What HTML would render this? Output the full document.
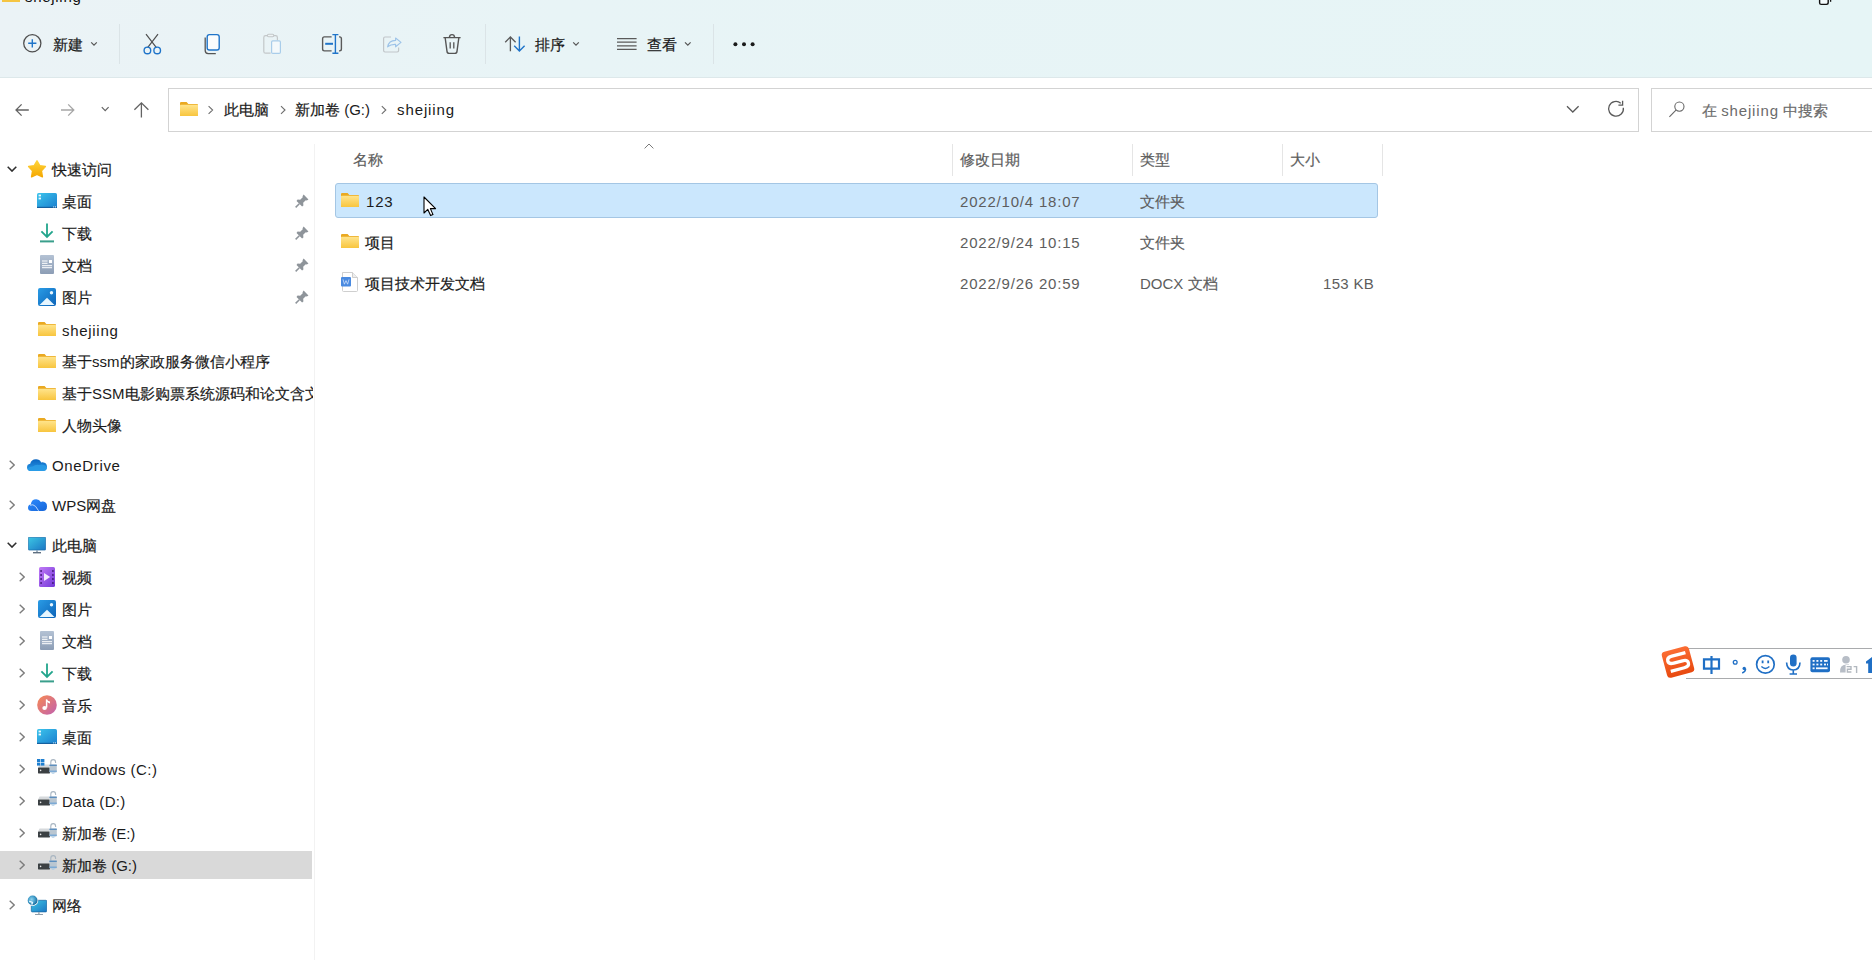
<!DOCTYPE html>
<html><head><meta charset="utf-8">
<style>
*{box-sizing:border-box}
html,body{margin:0;padding:0;width:1872px;height:960px;overflow:hidden;background:#fff;font-family:"Liberation Sans",sans-serif;font-size:15px;color:#1b1b1b}
.a{position:absolute}
.t{position:absolute;line-height:20px;white-space:nowrap;-webkit-text-stroke:.2px currentColor}
svg{position:absolute;overflow:visible}
#tb{position:absolute;left:0;top:0;width:1872px;height:78px;background:linear-gradient(90deg,#ebf3f6 0%,#e8f4f6 30%,#e6f5f6 100%);border-bottom:1px solid #dde8ea}
.sep{position:absolute;top:24px;width:1px;height:40px;background:#dbe4e7}
.navt{position:absolute;line-height:20px;white-space:nowrap;color:#1a1a1a;-webkit-text-stroke:.2px currentColor}
.hd{position:absolute;line-height:20px;white-space:nowrap;color:#5d5d5d;-webkit-text-stroke:.2px currentColor}
.cl{position:absolute;top:144px;width:1px;height:32px;background:#e5e5e5}
.g{color:#5d5d5d}
</style></head><body>
<svg width="0" height="0" style="position:absolute">
<defs>
<linearGradient id="gFold" x1="0" y1="0" x2="0" y2="1"><stop offset="0" stop-color="#ffe48c"/><stop offset="1" stop-color="#f8c53e"/></linearGradient>
<linearGradient id="gStar" x1="0" y1="0" x2="0" y2="1"><stop offset="0" stop-color="#ffd43a"/><stop offset="1" stop-color="#f5a800"/></linearGradient>
<linearGradient id="gDesk" x1="0" y1="0" x2="1" y2="1"><stop offset="0" stop-color="#3cc4ec"/><stop offset="1" stop-color="#1a7fcf"/></linearGradient>
<linearGradient id="gDoc" x1="0" y1="0" x2="0" y2="1"><stop offset="0" stop-color="#b4c2d4"/><stop offset="1" stop-color="#8c9db5"/></linearGradient>
<linearGradient id="gPic" x1="0" y1="0" x2="1" y2="1"><stop offset="0" stop-color="#2a9ce6"/><stop offset="1" stop-color="#0c63b8"/></linearGradient>
<linearGradient id="gMon" x1="0" y1="0" x2="1" y2="1"><stop offset="0" stop-color="#3cc6e4"/><stop offset="1" stop-color="#1b76c4"/></linearGradient>
<linearGradient id="gVid" x1="0" y1="0" x2="1" y2="1"><stop offset="0" stop-color="#c07af6"/><stop offset="1" stop-color="#7338d8"/></linearGradient>
<linearGradient id="gMus" x1="0" y1="0" x2="1" y2="1"><stop offset="0" stop-color="#f88a52"/><stop offset="1" stop-color="#c060b0"/></linearGradient>
<linearGradient id="gOne" x1="0" y1="0" x2="0" y2="1"><stop offset="0" stop-color="#0a64c0"/><stop offset="1" stop-color="#2a9be8"/></linearGradient>
<linearGradient id="gWps" x1="0" y1="0" x2="1" y2="1"><stop offset="0" stop-color="#2f8cff"/><stop offset="1" stop-color="#1565d8"/></linearGradient>
<symbol id="folder" viewBox="0 0 18 14"><path d="M0 1.1Q0 0 1.1 0H6.6L8.3 2.1H17Q18 2.1 18 3.1V13Q18 14 17 14H1Q0 14 0 13Z" fill="#eaa921"/><path d="M0 3.3Q0 2.8 .6 2.8H17.4Q18 2.8 18 3.4V13Q18 14 17 14H1Q0 14 0 13Z" fill="url(#gFold)"/></symbol>
<symbol id="desk" viewBox="0 0 20 15"><rect x="0" y="0" width="20" height="15" rx="1.6" fill="url(#gDesk)"/><rect x="0" y="13.8" width="20" height="1.2" fill="#15609f"/><rect x="16.2" y="13.4" width="1" height="1" fill="#e8f7fd"/><rect x="18" y="13.4" width="1" height="1" fill="#e8f7fd"/><rect x="1.6" y="1.6" width="2.4" height="1.8" fill="#e8f7fd"/><rect x="1.6" y="4.6" width="2.4" height="1.8" fill="#e8f7fd"/></symbol>
<symbol id="dl" viewBox="0 0 14 20"><path d="M7 .4V14M1.4 8.4L7 14L12.6 8.4" fill="none" stroke="#22a58c" stroke-width="1.8"/><rect x="0" y="17.4" width="14" height="2" fill="#3a9f8c"/></symbol>
<symbol id="doc" viewBox="0 0 14 19"><rect x="0" y="0" width="14" height="19" rx="1" fill="url(#gDoc)"/><rect x="2" y="5.5" width="5.5" height="1" fill="#fff"/><rect x="2" y="7.8" width="5.5" height="1" fill="#fff"/><rect x="9" y="5" width="3" height="3" fill="#fff"/><rect x="2" y="10.2" width="10" height="1" fill="#fff"/><rect x="2" y="12.2" width="10" height="1" fill="#fff"/></symbol>
<symbol id="pic" viewBox="0 0 18 18"><rect width="18" height="18" rx="2" fill="url(#gPic)"/><path d="M1.5 17L9 9.8L16.5 17Z" fill="#e6f6ff"/><circle cx="13.5" cy="4.8" r="1.7" fill="#e6f6ff"/></symbol>
<symbol id="pin" viewBox="0 0 13 13"><path d="M8 0.5L12.5 5L11 6L10 5.8L7.6 8.2L7.8 10.6L6.6 11.6L1.4 6.4L2.4 5.2L4.8 5.4L7.2 3L7 2Z" fill="#8e949a"/><path d="M4 9L.6 12.4" stroke="#8e949a" stroke-width="1.4"/></symbol>
<symbol id="mon" viewBox="0 0 18 17"><rect x=".3" y=".3" width="17.4" height="12.8" rx=".8" fill="url(#gMon)" stroke="#13609f" stroke-width=".6"/><rect x="8.2" y="13.2" width="1.6" height="2" fill="#8aa0b4"/><rect x="5" y="15" width="8" height="1.4" fill="#5f6f80"/></symbol>
<symbol id="vid" viewBox="0 0 16 20"><rect width="16" height="20" rx="1.6" fill="url(#gVid)"/><g fill="#3b1670"><rect x="1.3" y="3.2" width="1.6" height="1.6"/><rect x="1.3" y="7.2" width="1.6" height="1.6"/><rect x="1.3" y="11.2" width="1.6" height="1.6"/><rect x="1.3" y="15.2" width="1.6" height="1.6"/><rect x="13.1" y="3.2" width="1.6" height="1.6"/><rect x="13.1" y="7.2" width="1.6" height="1.6"/><rect x="13.1" y="11.2" width="1.6" height="1.6"/><rect x="13.1" y="15.2" width="1.6" height="1.6"/></g><path d="M5 6V14L11.2 10Z" fill="#f2eafd"/></symbol>
<symbol id="mus" viewBox="0 0 20 20"><circle cx="10" cy="10" r="9.8" fill="url(#gMus)"/><path d="M9.6 4.4V12.6" stroke="#fff" stroke-width="1.5"/><path d="M9.6 4.2Q10.6 6 13 6.6V8.4Q11 8 9.6 6.6Z" fill="#fff"/><ellipse cx="7.6" cy="13" rx="2.3" ry="2" fill="#fff"/></symbol>
<symbol id="drv" viewBox="0 0 20 16"><path d="M1 8.4L2.6 5.6H12V8.4Z" fill="#d6d9dc"/><rect x="1" y="8.4" width="12" height="6" rx=".6" fill="#3b4043"/><circle cx="3.6" cy="11.4" r=".8" fill="#e8e8e8"/><path d="M13.8 6.2V3.2Q13.8 0.6 16.2 0.6Q18.6 0.6 18.6 3.2V4" fill="none" stroke="#a9b6c2" stroke-width="1.1"/><rect x="12.4" y="5.6" width="7.4" height="8" rx=".8" fill="#b9c6d1"/><rect x="12.4" y="5.6" width="7.4" height="1.4" fill="#5d8fbf"/><rect x="12.4" y="11.6" width="7.4" height="1.2" fill="#6ea3d6"/><path d="M13.8 13.6Q16 16 18.4 13.6" fill="#a8c9e6"/></symbol>
<symbol id="one" viewBox="0 0 20 13"><path d="M4.2 13Q0 13 0 9.4Q0 6.2 3.2 5.8Q4.2 1.2 9 1.2Q12.8 1.2 14.2 4.4Q15 4.2 15.6 4.2Q20 4.6 20 8.8Q20 13 16 13Z" fill="url(#gOne)"/><path d="M4.2 13Q1 13 1 10.6Q2 8.8 5.6 8.6Q8.4 6.2 12 7Q15 5.6 18.2 7.4Q20 8.6 20 10Q19.4 13 16 13Z" fill="#2a9ce6" opacity=".85"/></symbol>
<symbol id="wps" viewBox="0 0 19 13"><path d="M3.6 13Q0 13 0 9.8Q0 7 2.8 6.6Q3.4 1.2 8.2 1.2Q11.4 1.2 12.8 4Q13.8 3.4 15 3.6Q19 4 19 8.4Q19 13 15 13Z" fill="url(#gWps)"/><path d="M2 7.2Q5 5.8 7.6 8.4L10.6 12.8" fill="none" stroke="#cfe3ff" stroke-width=".9"/></symbol>
<symbol id="net" viewBox="0 0 20 20"><radialGradient id="gGlobe" cx=".4" cy=".4" r=".6"><stop offset="0" stop-color="#8fd3ee"/><stop offset=".6" stop-color="#3f9bc8"/><stop offset="1" stop-color="#1e6c9c"/></radialGradient><rect x="4.3" y="5.3" width="15.4" height="11.6" rx=".8" fill="url(#gMon)" stroke="#15639f" stroke-width=".7"/><rect x="11.2" y="17" width="1.4" height="2" fill="#9aa8b4"/><rect x="8" y="19" width="8" height="1" fill="#8f9eab"/><circle cx="5.6" cy="5.4" r="5.6" fill="#fff"/><circle cx="5.6" cy="5.4" r="4.9" fill="url(#gGlobe)"/><path d="M2.2 6.2L5.4 7.4L4.8 9.6" fill="none" stroke="#e4f7ff" stroke-width="1.5"/></symbol>
<symbol id="chevR" viewBox="0 0 6 10"><path d="M.7 .7L5.2 5L.7 9.3" fill="none" stroke="#7c7c7c" stroke-width="1.35"/></symbol>
<symbol id="chevD" viewBox="0 0 10 6"><path d="M.7 .7L5 5.1L9.3 .7" fill="none" stroke="#2e2e2e" stroke-width="1.5"/></symbol>
</defs></svg>

<!-- toolbar -->
<div id="tb"></div>
<div class="a" style="left:2px;top:0;width:18px;height:2px;background:#f5c542"></div>
<div class="t" style="left:25px;top:-13px;color:#111;letter-spacing:.7px;-webkit-text-stroke:0">shejiing</div>
<svg style="left:1815px;top:0" width="20" height="8" viewBox="1815 0 20 8"><path d="M1819.6 -4V2.6Q1819.6 4.4 1821.4 4.4H1826.4Q1828.2 4.4 1828.2 2.6V-4" fill="#f4fbfc" stroke="#111" stroke-width="1.4"/><path d="M1830.6 -2V1.8" stroke="#111" stroke-width="1.3"/></svg>

<!-- 新建 -->
<div class="t" style="left:53px;top:35px;color:#1a1a1a">新建</div>
<div class="sep" style="left:119px"></div>
<div class="sep" style="left:485px"></div>
<div class="t" style="left:535px;top:35px;color:#1a1a1a">排序</div>
<div class="t" style="left:647px;top:35px;color:#1a1a1a">查看</div>
<div class="sep" style="left:713px"></div>

<!-- address row -->
<div class="a" style="left:168px;top:88px;width:1471px;height:44px;border:1px solid #d3d3d3;background:#fff"></div>
<div class="a" style="left:1651px;top:88px;width:240px;height:44px;border:1px solid #d3d3d3;background:#fff"></div>
<div class="t" style="left:224px;top:100px">此电脑</div>
<div class="t" style="left:295px;top:100px">新加卷<span style="-webkit-text-stroke:0"> (G:)</span></div>
<div class="t" style="left:397px;top:100px;letter-spacing:.9px;-webkit-text-stroke:0">shejiing</div>
<div class="t" style="left:1702px;top:101px;color:#6b6b6b">在 <span style="letter-spacing:.85px;-webkit-text-stroke:0">shejiing</span> 中搜索</div>

<!-- nav pane -->
<div class="a" style="left:314px;top:144px;width:1px;height:816px;background:#f2f2f2"></div>
<div class="a" style="left:0;top:851px;width:312px;height:28px;background:#d9d9d9"></div>
<div class="navt" style="left:52px;top:160px">快速访问</div>
<div class="navt" style="left:62px;top:192px">桌面</div>
<div class="navt" style="left:62px;top:224px">下载</div>
<div class="navt" style="left:62px;top:256px">文档</div>
<div class="navt" style="left:62px;top:288px">图片</div>
<div class="navt" style="left:62px;top:321px;letter-spacing:.7px;-webkit-text-stroke:0">shejiing</div>
<div class="navt" style="left:62px;top:352px">基于<span style="-webkit-text-stroke:0">ssm</span>的家政服务微信小程序</div>
<div class="navt" style="left:62px;top:384px;width:251px;overflow:hidden">基于<span style="-webkit-text-stroke:0">SSM</span>电影购票系统源码和论文含文档</div>
<div class="navt" style="left:62px;top:416px">人物头像</div>
<div class="navt" style="left:52px;top:456px;letter-spacing:.65px;-webkit-text-stroke:0">OneDrive</div>
<div class="navt" style="left:52px;top:496px"><span style="-webkit-text-stroke:0">WPS</span>网盘</div>
<div class="navt" style="left:52px;top:536px">此电脑</div>
<div class="navt" style="left:62px;top:568px">视频</div>
<div class="navt" style="left:62px;top:600px">图片</div>
<div class="navt" style="left:62px;top:632px">文档</div>
<div class="navt" style="left:62px;top:664px">下载</div>
<div class="navt" style="left:62px;top:696px">音乐</div>
<div class="navt" style="left:62px;top:728px">桌面</div>
<div class="navt" style="left:62px;top:760px;letter-spacing:.45px;-webkit-text-stroke:0">Windows (C:)</div>
<div class="navt" style="left:62px;top:792px;letter-spacing:.3px;-webkit-text-stroke:0">Data (D:)</div>
<div class="navt" style="left:62px;top:824px">新加卷<span style="-webkit-text-stroke:0"> (E:)</span></div>
<div class="navt" style="left:62px;top:856px">新加卷<span style="-webkit-text-stroke:0"> (G:)</span></div>
<div class="navt" style="left:52px;top:896px">网络</div>

<!-- list header -->
<div class="hd" style="left:353px;top:150px">名称</div>
<div class="hd" style="left:960px;top:150px">修改日期</div>
<div class="hd" style="left:1140px;top:150px">类型</div>
<div class="hd" style="left:1290px;top:150px">大小</div>
<div class="cl" style="left:952px"></div>
<div class="cl" style="left:1132px"></div>
<div class="cl" style="left:1282px"></div>
<div class="cl" style="left:1382px"></div>

<!-- rows -->
<div class="a" style="left:335px;top:183px;width:1043px;height:35px;background:#cbe7fd;border:1px solid #a4c6e4;border-radius:3px"></div>
<div class="t" style="left:366px;top:192px;letter-spacing:.8px;-webkit-text-stroke:0">123</div>
<div class="t g" style="left:960px;top:192px;letter-spacing:.8px;-webkit-text-stroke:0">2022/10/4 18:07</div>
<div class="t g" style="left:1140px;top:192px">文件夹</div>
<div class="t" style="left:365px;top:233px">项目</div>
<div class="t g" style="left:960px;top:233px;letter-spacing:.8px;-webkit-text-stroke:0">2022/9/24 10:15</div>
<div class="t g" style="left:1140px;top:233px">文件夹</div>
<div class="t" style="left:365px;top:274px">项目技术开发文档</div>
<div class="t g" style="left:960px;top:274px;letter-spacing:.8px;-webkit-text-stroke:0">2022/9/26 20:59</div>
<div class="t g" style="left:1140px;top:274px"><span style="-webkit-text-stroke:0">DOCX </span>文档</div>
<div class="t g" style="left:1323px;top:274px;letter-spacing:.3px;-webkit-text-stroke:0">153 KB</div>

<svg style="left:7px;top:166px" width="10" height="6"><use href="#chevD"/></svg>
<svg style="left:7px;top:542px" width="10" height="6"><use href="#chevD"/></svg>
<svg style="left:9px;top:460px" width="6" height="10"><use href="#chevR"/></svg>
<svg style="left:9px;top:500px" width="6" height="10"><use href="#chevR"/></svg>
<svg style="left:9px;top:900px" width="6" height="10"><use href="#chevR"/></svg>
<svg style="left:19px;top:572px" width="6" height="10"><use href="#chevR"/></svg>
<svg style="left:19px;top:604px" width="6" height="10"><use href="#chevR"/></svg>
<svg style="left:19px;top:636px" width="6" height="10"><use href="#chevR"/></svg>
<svg style="left:19px;top:668px" width="6" height="10"><use href="#chevR"/></svg>
<svg style="left:19px;top:700px" width="6" height="10"><use href="#chevR"/></svg>
<svg style="left:19px;top:732px" width="6" height="10"><use href="#chevR"/></svg>
<svg style="left:19px;top:764px" width="6" height="10"><use href="#chevR"/></svg>
<svg style="left:19px;top:796px" width="6" height="10"><use href="#chevR"/></svg>
<svg style="left:19px;top:828px" width="6" height="10"><use href="#chevR"/></svg>
<svg style="left:19px;top:860px" width="6" height="10"><use href="#chevR"/></svg>
<svg style="left:28px;top:160px" width="18" height="18" viewBox="0 0 18 18"><path d="M9.00 0.80 L11.76 5.60 L17.40 6.56 L13.47 10.85 L14.41 16.84 L9.00 14.30 L3.59 16.84 L4.53 10.85 L0.60 6.56 L6.24 5.60Z" fill="url(#gStar)" stroke="url(#gStar)" stroke-width="1.4" stroke-linejoin="round"/></svg>
<svg style="left:37px;top:193px" width="20" height="15"><use href="#desk"/></svg>
<svg style="left:40px;top:223px" width="14" height="20"><use href="#dl"/></svg>
<svg style="left:40px;top:255px" width="14" height="19"><use href="#doc"/></svg>
<svg style="left:38px;top:288px" width="18" height="18"><use href="#pic"/></svg>
<svg style="left:295px;top:194px" width="14" height="14"><use href="#pin"/></svg>
<svg style="left:295px;top:226px" width="14" height="14"><use href="#pin"/></svg>
<svg style="left:295px;top:258px" width="14" height="14"><use href="#pin"/></svg>
<svg style="left:295px;top:290px" width="14" height="14"><use href="#pin"/></svg>
<svg style="left:38px;top:322px" width="18" height="14"><use href="#folder"/></svg>
<svg style="left:38px;top:354px" width="18" height="14"><use href="#folder"/></svg>
<svg style="left:38px;top:386px" width="18" height="14"><use href="#folder"/></svg>
<svg style="left:38px;top:418px" width="18" height="14"><use href="#folder"/></svg>
<svg style="left:27px;top:458px" width="20" height="13"><use href="#one"/></svg>
<svg style="left:28px;top:498px" width="19" height="13"><use href="#wps"/></svg>
<svg style="left:28px;top:537px" width="18" height="17"><use href="#mon"/></svg>
<svg style="left:39px;top:567px" width="16" height="20"><use href="#vid"/></svg>
<svg style="left:38px;top:600px" width="18" height="18"><use href="#pic"/></svg>
<svg style="left:40px;top:631px" width="14" height="19"><use href="#doc"/></svg>
<svg style="left:40px;top:663px" width="14" height="20"><use href="#dl"/></svg>
<svg style="left:37px;top:695px" width="20" height="20"><use href="#mus"/></svg>
<svg style="left:37px;top:729px" width="20" height="15"><use href="#desk"/></svg>
<svg style="left:37px;top:759px" width="20" height="16"><use href="#drv"/></svg>
<svg style="left:37px;top:791px" width="20" height="16"><use href="#drv"/></svg>
<svg style="left:37px;top:823px" width="20" height="16"><use href="#drv"/></svg>
<svg style="left:37px;top:855px" width="20" height="16"><use href="#drv"/></svg>
<svg style="left:37px;top:759px" width="8" height="7" viewBox="0 0 8 7"><rect x="0" y="0" width="3.4" height="3" fill="#1e7fd0"/><rect x="4" y="0" width="3.4" height="3" fill="#1e7fd0"/><rect x="0" y="3.6" width="3.4" height="3" fill="#1e7fd0"/><rect x="4" y="3.6" width="3.4" height="3" fill="#1e7fd0"/></svg>
<svg style="left:27px;top:895px" width="20" height="20"><use href="#net"/></svg>
<svg style="left:341px;top:193px" width="18" height="14"><use href="#folder"/></svg>
<svg style="left:341px;top:234px" width="18" height="14"><use href="#folder"/></svg>
<svg style="left:341px;top:272px" width="17" height="20" viewBox="0 0 17 20"><path d="M1.5 .5H11.5L16.5 5.5V18.5Q16.5 19.5 15.5 19.5H2.5Q1.5 19.5 1.5 18.5Z" fill="#fff" stroke="#c9c9c9" stroke-width=".9"/><path d="M11.5 .5V5.5H16.5" fill="#eee" stroke="#c9c9c9" stroke-width=".9"/><rect x="0" y="5" width="10" height="9.5" rx="1" fill="#4a8ae0"/><path d="M2 7.4L3.4 12.2L5 8.6L6.6 12.2L8 7.4" fill="none" stroke="#cfe1fb" stroke-width=".8"/></svg>
<svg style="left:644px;top:143px" width="10" height="6" viewBox="0 0 10 6"><path d="M.6 5.4L5 1L9.4 5.4" fill="none" stroke="#7a7a7a" stroke-width="1"/></svg>
<svg style="left:423px;top:196px" width="14" height="21" viewBox="0 0 14 21"><path d="M1 1V17L4.8 13.4L7.6 19.6L10 18.6L7.4 12.6H12.6Z" fill="#fff" stroke="#000" stroke-width="1.1" stroke-linejoin="round"/></svg>
<svg style="left:0;top:0" width="1872" height="140" viewBox="0 0 1872 140"><circle cx="32.3" cy="43.3" r="8.6" fill="none" stroke="#4f4f4f" stroke-width="1.3"/><path d="M28.2 43.3H36.4M32.3 39.2V47.4" stroke="#1f74c9" stroke-width="1.4"/><path d="M91.2 42.3L94 45.1L96.8 42.3" fill="none" stroke="#555" stroke-width="1.2"/><path d="M146 34.2L156.4 47.6M158 34.2L147.6 47.6" stroke="#4f4f4f" stroke-width="1.2"/><circle cx="147.4" cy="50.4" r="3.3" fill="none" stroke="#1f74c9" stroke-width="1.4"/><circle cx="157.2" cy="50.4" r="3.3" fill="none" stroke="#1f74c9" stroke-width="1.4"/><path d="M205.2 37.6V50.6Q205.2 53.6 208.2 53.6H215.8" fill="none" stroke="#555" stroke-width="1.3"/><rect x="207.2" y="34.6" width="12" height="15.4" rx="2.2" fill="#fafcfd" stroke="#1f74c9" stroke-width="1.4"/><path d="M270.6 53.2H265.6Q263.8 53.2 263.8 51.4V37.4Q263.8 35.6 265.6 35.6H275.6Q277.4 35.6 277.4 37.4V40.6" fill="none" stroke="#c3c7c9" stroke-width="1.2"/><rect x="267.4" y="34.2" width="6.4" height="2.6" rx="1.2" fill="#eef4f6" stroke="#c3c7c9" stroke-width="1.1"/><rect x="271.6" y="40.8" width="8.8" height="12.6" rx="1.2" fill="#f4f9fb" stroke="#a9cdea" stroke-width="1.2"/><path d="M331.6 36.9H324.4Q322.6 36.9 322.6 38.7V49.1Q322.6 50.9 324.4 50.9H331.6M339 36.9H339.6Q341.4 36.9 341.4 38.7V49.1Q341.4 50.9 339.6 50.9H339" fill="none" stroke="#5a5a5a" stroke-width="1.4"/><path d="M335.4 34.6V53.2M332.4 34.6H338.4M332.4 53.2H338.4" stroke="#1f74c9" stroke-width="1.4"/><path d="M325.2 43.8H333" stroke="#1f74c9" stroke-width="2"/><path d="M391 37H385Q383.6 37 383.6 38.4V50.6Q383.6 52 385 52H397.2Q398.6 52 398.6 50.6V47.4" fill="none" stroke="#c1c6c9" stroke-width="1.2"/><path d="M387.6 46.8Q388.8 40.6 395.6 40.4V38L401 42.4L395.6 46.8V44.4Q390.8 44.2 387.6 46.8Z" fill="none" stroke="#9dc3e8" stroke-width="1.1" stroke-linejoin="round"/><path d="M443.4 37.6H460.6M449.4 37.4Q449.6 34.6 452 34.6Q454.4 34.6 454.6 37.4M445.2 38L447 51.4Q447.2 53.4 449.2 53.4H454.8Q456.8 53.4 457 51.4L458.8 38" fill="none" stroke="#555" stroke-width="1.4"/><path d="M450.2 42.2V48.6M453.8 42.2V48.6" stroke="#555" stroke-width="1.3"/><path d="M510.4 51.2V37M505.2 42.2L510.4 37L515.6 42.2" fill="none" stroke="#5a5a5a" stroke-width="1.3"/><path d="M519.4 36.6V51M514.2 45.8L519.4 51L524.6 45.8" fill="none" stroke="#1f74c9" stroke-width="1.4"/><path d="M573.2 42.4L576 45.2L578.8 42.4" fill="none" stroke="#555" stroke-width="1.2"/><path d="M617 38.6H636.6M617 42.2H636.6M617 45.8H636.6M617 49.4H636.6" stroke="#5a5a5a" stroke-width="1.2"/><path d="M685 42.4L687.8 45.2L690.6 42.4" fill="none" stroke="#555" stroke-width="1.2"/><circle cx="735.4" cy="44.2" r="2" fill="#1a1a1a"/><circle cx="744" cy="44.2" r="2" fill="#1a1a1a"/><circle cx="752.6" cy="44.2" r="2" fill="#1a1a1a"/><path d="M28.8 110H16.2M21.6 104.4L16 110L21.6 115.6" fill="none" stroke="#636363" stroke-width="1.3"/><path d="M61 110H73.6M68.2 104.4L73.8 110L68.2 115.6" fill="none" stroke="#a6a6a6" stroke-width="1.3"/><path d="M101.8 107.2L105.2 110.6L108.6 107.2" fill="none" stroke="#636363" stroke-width="1.2"/><path d="M141.4 117.6V102.8M134.4 109.8L141.4 102.8L148.4 109.8" fill="none" stroke="#636363" stroke-width="1.3"/><path d="M208.6 106.2L212.6 110L208.6 113.8M281 106.2L285 110L281 113.8M381.8 106.2L385.8 110L381.8 113.8" fill="none" stroke="#6e6e6e" stroke-width="1.1"/><path d="M1567 106.2L1572.8 112L1578.6 106.2" fill="none" stroke="#5a5a5a" stroke-width="1.3"/><path d="M1623.33 107.77A7.4 7.4 0 1 1 1620.76 103.13" fill="none" stroke="#5a5a5a" stroke-width="1.3"/><path d="M1622.6 100.8V105.2H1618.4" fill="none" stroke="#5a5a5a" stroke-width="1.3"/><circle cx="1679.4" cy="106.6" r="4.6" fill="none" stroke="#666" stroke-width="1.1"/><path d="M1676.2 109.8L1669.4 116.8" stroke="#666" stroke-width="1.1"/></svg>
<svg style="left:180px;top:102px" width="18" height="14"><use href="#folder"/></svg>
<div class="a" style="left:1686px;top:648px;width:200px;height:31px;background:#fff;border-top:1px solid #a9abad;border-bottom:1px solid #a9abad"></div><svg style="left:1650px;top:640px" width="222" height="45" viewBox="1650 640 222 45"><defs><linearGradient id="gS" x1="0" y1="0" x2="0" y2="1"><stop offset="0" stop-color="#fb6d33"/><stop offset="1" stop-color="#e8490f"/></linearGradient></defs><g transform="rotate(-15 1678 662)"><rect x="1664" y="648.6" width="28" height="26.8" rx="3.4" fill="url(#gS)"/><path d="M1687.6 654.8H1673.6Q1668.4 654.8 1668.4 658.4Q1668.4 662 1673.6 662H1682.6Q1687.8 662 1687.8 665.6Q1687.8 669.2 1682.6 669.2H1668.6" fill="none" stroke="#fff" stroke-width="3.3"/></g><path d="M1704 659.4H1719V668.6H1704Z" fill="none" stroke="#1f6fc5" stroke-width="2.2"/><path d="M1711.5 656V674" stroke="#1f6fc5" stroke-width="2.2"/><circle cx="1735.2" cy="662.2" r="1.9" fill="none" stroke="#1f6fc5" stroke-width="1.3"/><circle cx="1744.2" cy="668.4" r="1.7" fill="#1f6fc5"/><path d="M1745.6 668.8Q1745.6 671.6 1742.2 673" fill="none" stroke="#1f6fc5" stroke-width="1.5"/><circle cx="1765.4" cy="664.4" r="8.8" fill="none" stroke="#1f6fc5" stroke-width="1.7"/><path d="M1762.6 660.6V663.2M1768.2 660.6V663.2" stroke="#1f6fc5" stroke-width="1.8"/><path d="M1761.4 666.6Q1765.4 670.2 1769.4 666.6" fill="none" stroke="#1f6fc5" stroke-width="1.4"/><rect x="1790" y="654.6" width="6.6" height="12" rx="3.3" fill="#1f6fc5"/><path d="M1786.6 662.6Q1786.8 670 1793.3 670Q1799.8 670 1800 662.6M1793.3 670V674M1789.6 674H1797" fill="none" stroke="#1f6fc5" stroke-width="1.6"/><rect x="1810.4" y="657.2" width="19.6" height="15" rx="2" fill="#1f6fc5"/><g fill="#f4f9ff"><rect x="1812.6" y="660" width="2" height="1.8"/><rect x="1816.4" y="660" width="2" height="1.8"/><rect x="1820.2" y="660" width="2" height="1.8"/><rect x="1824" y="660" width="3.6" height="1.8"/><rect x="1812.6" y="663.6" width="2" height="1.8"/><rect x="1816.4" y="663.6" width="2" height="1.8"/><rect x="1820.2" y="663.6" width="2" height="1.8"/><rect x="1824" y="663.6" width="2" height="1.8"/><rect x="1827" y="663.6" width="1" height="1.8"/><rect x="1812.6" y="667.4" width="2" height="1.8"/><rect x="1816" y="667.4" width="11.6" height="1.8"/></g><circle cx="1846" cy="659.8" r="3.8" fill="#b7bdc6"/><path d="M1840 672.4Q1839.4 665 1846 664.4H1849V672.4Z" fill="#b7bdc6"/><rect x="1845.6" y="665" width="13.6" height="9" fill="#fff"/><path d="M1846.6 666.6H1851V669.2H1847.4V672H1851.4M1853.6 666.6H1856.6V673" fill="none" stroke="#b2b8bf" stroke-width="1.4"/><path d="M1872 657L1866 661.6L1866 663.4L1868.2 663.4V673L1872 673Z" fill="#1f6fc5"/></svg>
</body></html>
